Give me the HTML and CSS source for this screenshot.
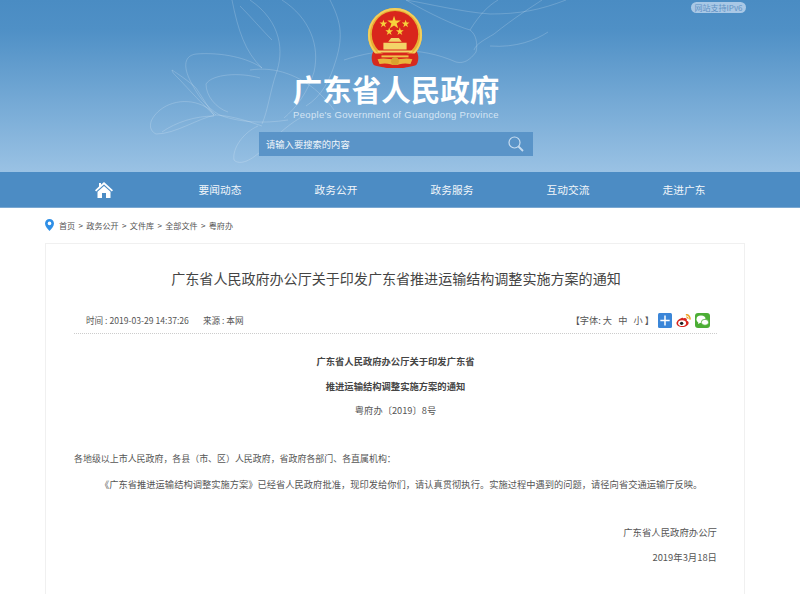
FILE: index.html

```html
<html>

<head>
  <title>广东省人民政府</title>
  <link rel="stylesheet" href="styles.css">
</head>

<body>
  <div class="top">
    <!-- flower outlines behind the logo -->
    <svg class="flower" width="800" height="172" viewBox="0 0 800 172" fill="none">
      <path d="M232 0C238 30 245 52 262 68C248 58 222 52 196 54C182 56 184 70 192 84C200 100 212 112 222 116C240 122 262 124 288 120" />
      <path d="M172 70C178 74 190 82 196 88C204 100 210 110 214 115C196 98 184 84 178 78C174 74 172 72 172 70Z" />
      <path d="M216 115C200 98 175 98 160 110C148 120 148 130 156 134C176 134 198 118 216 115C234 116 250 122 262 126" />
      <path d="M162 132C176 122 196 116 214 116" />
      <path d="M260 78C240 72 212 74 206 84C206 96 216 108 228 112" />
      <path d="M258 126C244 132 232 148 234 160C240 166 252 160 262 150C272 140 286 126 300 118" />
      <path d="M240 6C252 18 262 30 272 40" />
      <path d="M250 0C282 22 284 52 276 74C270 92 268 110 262 124" />
      <path d="M282 0C310 18 320 46 314 72C308 92 296 108 284 118" />
      <path d="M330 0C340 20 344 34 336 60C330 80 322 96 306 106" />
      <path d="M250 70C276 66 300 76 318 92C326 100 330 104 334 110" />
      <path d="M406 0C430 14 456 26 470 30C476 34 478 44 476 52C470 60 464 64 456 62C420 46 380 48 344 60" />
      <path d="M406 0C430 4 462 12 490 14C520 14 540 10 566 0" />
      <path d="M542 0C530 8 514 18 494 34C484 40 476 44 474 50" />
      <path d="M548 32C536 40 516 48 490 46" />
      <path d="M470 30C480 14 488 6 498 0" />
    </svg>
    <div class="ipv6">网站支持IPv6</div>
    <svg class="emblem" width="58" height="62" viewBox="0 0 60 64">
      <path d="M9 44C4 50 6 57 8 60C18 64 42 64 52 60C54 57 56 50 51 44Z" fill="#d52a1e" />
      <circle cx="30" cy="29" r="28" fill="#e8b035" />
      <circle cx="30" cy="29" r="27" fill="none" stroke="#f3cf5c" stroke-width="2" />
      <circle cx="30" cy="28" r="24" fill="#d9261c" />
      <polygon points="29,9 30.6,14 36,14 31.7,17 33.3,22 29,19 24.7,22 26.3,17 22,14 27.4,14" fill="#f6d23c" />
      <polygon points="18,13 19,16 22,16 19.5,18 20.5,21 18,19 15.5,21 16.5,18 14,16 17,16" fill="#f6d23c" />
      <polygon points="41,13 42,16 45,16 42.500,18 43.500,21 41,19 38.500,21 39.500,18 37,16 40,16" fill="#f6d23c" />
      <polygon points="24,21 25,24 28,24 25.500,26 26.500,29 24,27 21.500,29 22.500,26 20,24 23,24" fill="#f6d23c" />
      <polygon points="35,21 36,24 39,24 36.500,26 37.500,29 35,27 32.500,29 33.500,26 31,24 34,24" fill="#f6d23c" />
      <path d="M23 36L26 32H34L37 36ZM18 37H42V44H18Z" fill="#f3d468" />
      <path d="M12 45H48V47H12Z" fill="#f3d468" />
      <path d="M9 48H51C50 56 44 62 38 63H22C16 62 10 56 9 48Z" fill="#d9261c" />
      <path d="M16 50H44V52H16Z" fill="#f0c24a" />
      <path d="M12 54C18 52 24 54 30 54C36 54 42 52 48 54L46 59C38 57 34 60 30 60C26 60 22 57 14 59Z" fill="#e9b53c" />
      <circle cx="30" cy="56" r="4" fill="#d9a22e" />
    </svg>
    <div class="top-name">广东省人民政府</div>
    <div class="top-en">People's Government of Guangdong Province</div>
    <div class="search">
      <span>请输入要搜索的内容</span>
      <svg width="16" height="16" viewBox="0 0 16 16" fill="none" stroke="#c6dcf0">
        <circle cx="6.500" cy="6.500" r="5.500" stroke-width="1.200" />
        <path d="M10.500 10.500L15 15" stroke-width="1.800" />
      </svg>
    </div>
  </div>

  <div class="nav">
    <ul>
      <li>
        <svg width="18" height="16" viewBox="0 0 18 16" fill="#fff">
          <path d="M9 0L18 8.200L16.800 9.500L9 2.500L1.200 9.500L0 8.200L4 4.600V1H6V2.800Z" />
          <path d="M9 4L15.500 9.800V16H11V11H7V16H2.500V9.800Z" />
        </svg>
      </li>
      <li>要闻动态</li>
      <li>政务公开</li>
      <li>政务服务</li>
      <li>互动交流</li>
      <li>走进广东</li>
    </ul>
  </div>

  <div class="crumb">
    <svg width="9" height="12" viewBox="0 0 9 12">
      <path d="M4.500 0C7 0 9 2 9 4.400C9 7 6.500 9.800 4.500 12C2.500 9.800 0 7 0 4.400C0 2 2 0 4.500 0Z" fill="#2f8fe6" />
      <circle cx="4.500" cy="4.400" r="1.800" fill="#fff" />
    </svg>
    <span>首页 &gt; 政务公开 &gt; 文件库 &gt; 全部文件 &gt; 粤府办</span>
  </div>

  <div class="card">
    <h1>广东省人民政府办公厅关于印发广东省推进运输结构调整实施方案的通知</h1>
    <div class="meta">
      <div class="info">
        <span>时间 : 2019-03-29 14:37:26</span>
        <span>来源 : 本网</span>
      </div>
      <div class="tools">
        <span class="size">【字体: 大&nbsp;&nbsp; 中&nbsp;&nbsp; 小 】</span>
        <svg width="14" height="15" viewBox="0 0 15 15" preserveAspectRatio="none">
          <rect width="15" height="15" rx="1.500" fill="#3b86d8" />
          <path d="M6.700 2.500H8.300V6.700H12.500V8.300H8.300V12.500H6.700V8.300H2.500V6.700H6.700Z" fill="#fff" />
        </svg>
        <svg width="15" height="15" viewBox="0 0 16 15" fill="none">
          <path d="M6.500 4.500C3.500 5.500 0.500 8 0.500 10.500C0.500 13 3.500 14.500 7 14.500C10.500 14.500 13.500 12.500 13.500 10C13.500 8.500 12 8 11.500 7.800C12 6 11 4.500 8.500 5C7.500 5.300 7.500 4.200 6.500 4.500Z" fill="#d8261f" />
          <ellipse cx="6.500" cy="10.300" rx="4.200" ry="3" fill="#fff" />
          <circle cx="6" cy="10.500" r="1.800" fill="#222" />
          <path d="M10.500 1.500C13 1 15.500 3.500 14.800 6.500" stroke="#efa11e" stroke-width="1.500" />
          <path d="M10.800 3.800C12 3.600 13 4.600 12.800 5.800" stroke="#efa11e" stroke-width="1.200" />
        </svg>
        <svg width="15" height="15" viewBox="0 0 15 15">
          <rect width="15" height="15" rx="3" fill="#4cae35" />
          <ellipse cx="6" cy="6.300" rx="4.500" ry="3.700" fill="#fff" />
          <path d="M3.500 8.500L3 11L6 9.500Z" fill="#fff" />
          <ellipse cx="10" cy="9.300" rx="3.700" ry="3" fill="#fff" stroke="#4cae35" stroke-width="0.800" />
        </svg>
      </div>
    </div>
    <div class="doc">
      <p class="mid bold">广东省人民政府办公厅关于印发广东省</p>
      <p class="mid bold">推进运输结构调整实施方案的通知</p>
      <p class="mid">粤府办〔2019〕8号</p>
      <p class="gap lead">各地级以上市人民政府，各县（市、区）人民政府，省政府各部门、各直属机构：</p>
      <p class="indent">《广东省推进运输结构调整实施方案》已经省人民政府批准，现印发给你们，请认真贯彻执行。实施过程中遇到的问题，请径向省交通运输厅反映。</p>
      <p class="right gap">广东省人民政府办公厅</p>
      <p class="right">2019年3月18日</p>
    </div>
  </div>
</body>

</html>
```

FILE: styles.css

```css
html, body {
  margin: 0;
  padding: 0;
  height: 594px;
  overflow: hidden;
}

body {
  background: #fff;
  color: #555;
  font-family: "Noto Sans CJK SC", "Liberation Sans", sans-serif;
  font-size: 9px;
}

.top {
  position: relative;
  height: 172px;
  box-sizing: border-box;
  padding: 7px 8px 0 0;
  display: flex;
  flex-direction: column;
  align-items: center;
  background: linear-gradient(#4a8cc3, #4f90c6 30px, #9ac2e4);
  overflow: hidden;
}

.flower {
  position: absolute;
  top: 0;
  left: 0;
}

.flower path {
  stroke: rgba(255, 255, 255, 0.18);
  stroke-width: 1;
}

.ipv6 {
  position: absolute;
  top: 2px;
  left: 691px;
  width: 55px;
  height: 11px;
  line-height: 11px;
  border-radius: 6px;
  background: #a9c8e6;
  color: #5f92c4;
  font-size: 8px;
  text-align: center;
  white-space: nowrap;
}

.emblem {
  position: relative;
  flex: none;
  margin-right: 3px;
}

.top-name {
  position: relative;
  margin-top: 3px;
  height: 32px;
  line-height: 32px;
  color: #fff;
  font-size: 29.500px;
  font-weight: bold;
  white-space: nowrap;
}

.top-en {
  position: relative;
  margin-top: 5px;
  height: 12px;
  line-height: 12px;
  color: #d5e5f4;
  font-family: "Liberation Sans", sans-serif;
  font-size: 9.500px;
  letter-spacing: 0.300px;
  white-space: nowrap;
}

.search {
  position: relative;
  margin-top: 11px;
  width: 274px;
  height: 24px;
  box-sizing: border-box;
  padding: 0 9px 0 7px;
  display: flex;
  align-items: center;
  justify-content: space-between;
  background: #5a94c8;
  color: #f2f7fb;
  font-size: 9.300px;
}

.nav {
  height: 35px;
  background: #4c8cc4;
  box-shadow: 0 1px 0 #7aa8d2;
}

.nav ul {
  list-style: none;
  margin: 0 0 0 46px;
  padding: 0;
  display: grid;
  grid-template-columns: repeat(6, 116px);
}

.nav li {
  height: 35px;
  display: flex;
  align-items: center;
  justify-content: center;
  color: #f2f6fa;
  font-size: 10.700px;
}

.crumb {
  height: 36px;
  box-sizing: border-box;
  margin-left: 45px;
  display: flex;
  align-items: center;
  gap: 5px;
  font-size: 8.100px;
  word-spacing: 1.500px;
}

.card {
  width: 700px;
  height: 351px;
  box-sizing: border-box;
  margin-left: 45px;
  padding: 0 27px 0 28px;
  border: 1px solid #f0f0f0;
  border-bottom: none;
}

h1 {
  margin: 0;
  padding: 23px 0 0 1px;
  height: 40px;
  line-height: 22px;
  color: #444;
  font-size: 14.050px;
  font-weight: normal;
  text-align: center;
  white-space: nowrap;
}

.meta {
  height: 27px;
  box-sizing: border-box;
  padding: 0 7px 0 12px;
  display: flex;
  align-items: center;
  justify-content: space-between;
  border-bottom: 1px dotted #ccc;
}

.info {
  display: flex;
  gap: 14px;
  font-size: 8.600px;
}

.tools {
  display: flex;
  align-items: center;
  gap: 4px;
}

.size {
  font-size: 9.200px;
}

.doc {
  padding-top: 15px;
  font-size: 9.280px;
}

.doc p {
  margin: 0;
  height: 24.700px;
  line-height: 24.700px;
  white-space: nowrap;
}

.doc .gap {
  margin-top: 24px;
}

.doc .lead {
  font-size: 8.950px;
}

.doc .mid {
  text-align: center;
}

.doc .bold {
  font-weight: bold;
  font-size: 9.300px;
  color: #444;
}

.doc .indent {
  padding-left: 26px;
}

.doc .right {
  text-align: right;
  font-size: 9.400px;
}
```
